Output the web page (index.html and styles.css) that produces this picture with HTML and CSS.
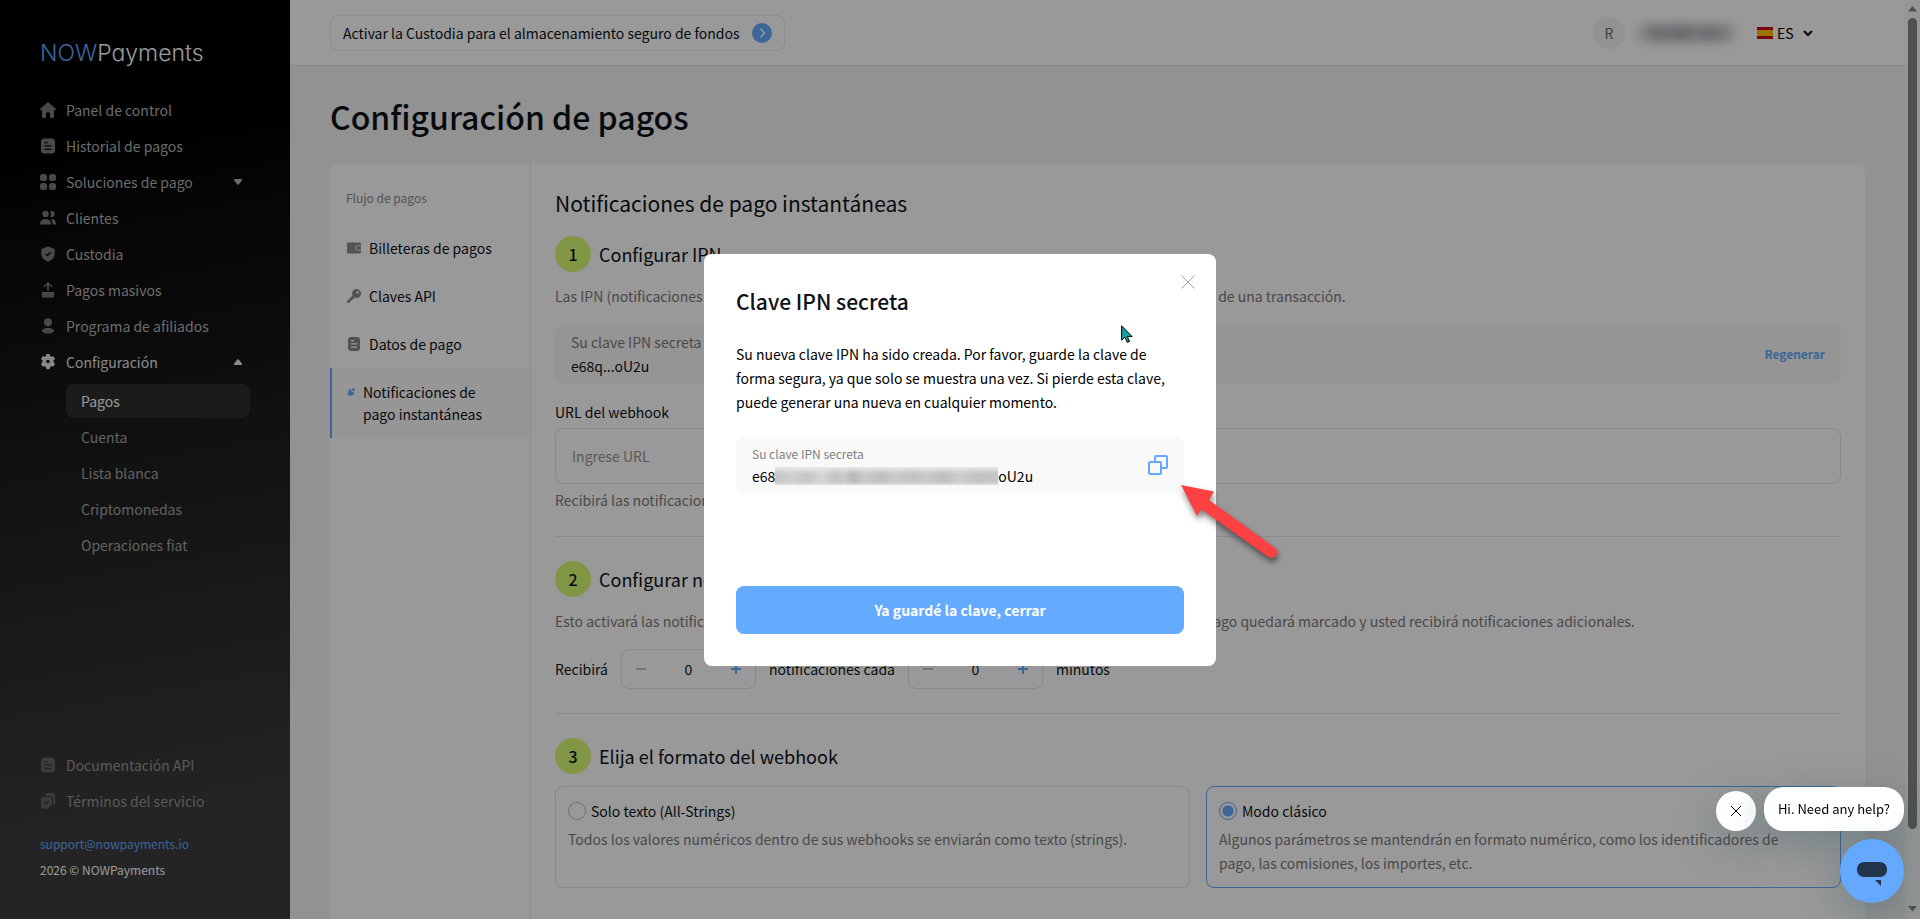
FILE: index.html
```html
<!DOCTYPE html>
<html lang="es">
<head>
<meta charset="utf-8">
<meta name="viewport" content="width=device-width, initial-scale=1">
<title>Configuración de pagos – NOWPayments</title>
<link rel="stylesheet" href="styles.css">
</head>
<body>
<div class="app">
  <aside class="sidebar">
    <a class="logo" href="#"><span class="logo-now">NOW</span>Payments</a>
    <nav class="menu">
      <a class="menu-item" href="#"><svg class="icon" viewBox="0 0 16 16"><path d="M7.300.5a1 1 0 0 1 1.400 0l7 6.300c.5.5.2 1.400-.5 1.400H14V15a1 1 0 0 1-1 1h-2.200a.8.8 0 0 1-.8-.8V12a2 2 0 0 0-4 0v3.200a.8.8 0 0 1-.8.8H3a1 1 0 0 1-1-1V8.200H.8c-.7 0-1-.9-.5-1.400z"/></svg>Panel de control</a>
      <a class="menu-item" href="#"><svg class="icon" viewBox="0 0 16 16"><path fill-rule="evenodd" d="M4.500.5h7a3.500 3.500 0 0 1 3.500 3.500v8a3.500 3.500 0 0 1-3.500 3.500h-7A3.500 3.500 0 0 1 1 12V4A3.500 3.500 0 0 1 4.500.5zM4.500 4v1.300h3V4zm0 3.300v1.300h7V7.300zm0 3.400V12h7v-1.300z"/></svg>Historial de pagos</a>
      <a class="menu-item" href="#"><svg class="icon" viewBox="0 0 16 16"><rect x="0" y="0" width="7" height="7" rx="2.500"/><rect x="9" y="0" width="7" height="7" rx="2.500"/><rect x="0" y="9" width="7" height="7" rx="2.500"/><rect x="9" y="9" width="7" height="7" rx="2.500"/></svg>Soluciones de pago<svg class="caret" viewBox="0 0 8 8"><path d="M1 1h6c1 0 1.300 1 .7 1.700L4.700 6.500a1 1 0 0 1-1.400 0L.3 2.700C-.3 2 0 1 1 1z"/></svg></a>
      <a class="menu-item" href="#"><svg class="icon" viewBox="0 0 16 16"><circle cx="5.500" cy="4" r="3.200"/><path d="M0 14.500C0 10.500 2.500 9 5.500 9s5.500 1.500 5.500 5.500z"/><path d="M10 1.200a3.200 3.200 0 1 1 0 5.600 5 5 0 0 0 0-5.600zM11 9c3.300 0 5 1.800 5 5.500h-3.500c0-2.500-.5-4-1.500-5.500z"/></svg>Clientes</a>
      <a class="menu-item" href="#"><svg class="icon" viewBox="0 0 16 16"><path fill-rule="evenodd" d="M8 .5l6.200 2.200c.3.100.5.300.5.600V7.500c0 4-2.500 6.500-6.700 8.200-4.200-1.700-6.700-4.200-6.700-8.200V3.300c0-.3.200-.5.500-.6zM7.400 10.600l3.800-3.800-1-1-2.800 2.800-1.200-1.200-1 1z"/></svg>Custodia</a>
      <a class="menu-item" href="#"><svg class="icon" viewBox="0 0 16 16"><path d="M8 0l4.200 4.300-1 1-2.400-2.400V8.500H7.200V2.900L4.800 5.300l-1-1zM2 10h12v4.500a1 1 0 0 1-1 1H3a1 1 0 0 1-1-1z"/></svg>Pagos masivos</a>
      <a class="menu-item" href="#"><svg class="icon" viewBox="0 0 16 16"><circle cx="8" cy="4.300" r="4"/><ellipse cx="8" cy="12.700" rx="6" ry="2.900"/></svg>Programa de afiliados</a>
      <a class="menu-item is-open" href="#"><svg class="icon" viewBox="0 0 16 16"><path fill-rule="evenodd" d="M6.700.5h2.600l.5 2 1.400.8 2-.6 1.300 2.300-1.500 1.500v1.700L14.500 9.900l-1.300 2.300-2-.5-1.400.8-.5 2.300H6.700l-.5-2.300-1.400-.8-2 .5L1.500 9.900 3 8.200V6.500L1.500 5l1.300-2.300 2 .6 1.400-.8zM8 5.200a2.300 2.300 0 1 0 0 4.600 2.300 2.300 0 0 0 0-4.600z" stroke-width="1" stroke="currentColor" stroke-linejoin="round"/></svg>Configuración<svg class="caret" viewBox="0 0 8 8"><path d="M1 7h6c1 0 1.300-1 .7-1.700L4.700 1.500a1 1 0 0 0-1.400 0L.3 5.300C-.3 6 0 7 1 7z"/></svg></a>
      <div class="submenu">
        <a class="submenu-item is-current" href="#">Pagos</a>
        <a class="submenu-item" href="#">Cuenta</a>
        <a class="submenu-item" href="#">Lista blanca</a>
        <a class="submenu-item" href="#">Criptomonedas</a>
        <a class="submenu-item" href="#">Operaciones fiat</a>
      </div>
    </nav>
    <footer class="sidebar-footer">
      <a class="menu-item is-muted" href="#"><svg class="icon" viewBox="0 0 16 16"><path fill-rule="evenodd" d="M4.500.5h7a3.500 3.500 0 0 1 3.500 3.500v8a3.500 3.500 0 0 1-3.500 3.500h-7A3.500 3.500 0 0 1 1 12V4A3.500 3.500 0 0 1 4.500.5zM4.500 4v1.300h3V4zm0 3.300v1.300h7V7.300zm0 3.400V12h7v-1.300z"/></svg>Documentación API</a>
      <a class="menu-item is-muted" href="#"><svg class="icon" viewBox="0 0 16 16"><path d="M7 0h5a3 3 0 0 1 3 3v7a2 2 0 0 1-2 2V6a3 3 0 0 0-3-3H5a3 3 0 0 1 2-3z"/><path fill-rule="evenodd" d="M3 4h7a2 2 0 0 1 2 2v5l-3.500 4.700H3a2 2 0 0 1-2-2V6a2 2 0 0 1 2-2zm2.700 7.800l3.600-3.500-1-1-2.600 2.600-1.200-1.200-1 1z"/></svg>Términos del servicio</a>
      <div class="contact">
        <a class="email" href="#">support@nowpayments.io</a>
        <span class="copyright">2026 © NOWPayments</span>
      </div>
    </footer>
  </aside>

  <div class="page">
    <header class="topbar">
      <a class="promo" href="#">Activar la Custodia para el almacenamiento seguro de fondos
        <svg class="promo-arrow" viewBox="0 0 20 20"><circle cx="10" cy="10" r="10" fill="#64a9ff"/><path d="M8.500 5.500l4 4.500-4 4.500" fill="none" stroke="#fff" stroke-width="1.400"/></svg>
      </a>
      <div class="account">
        <span class="avatar">R</span>
        <span class="user-name" aria-hidden="true"></span>
        <label class="language">
          <svg class="flag" viewBox="0 0 16 12"><path fill="#c60b1e" d="M0 0h16v12H0z"/><path fill="#ffc400" d="M0 3h16v6H0z"/></svg>
          <select aria-label="Idioma"><option>ES</option></select>
          <svg class="chevron" viewBox="0 0 10 8"><path d="M1 2l4 4 4-4" fill="none" stroke="#000" stroke-width="2"/></svg>
        </label>
      </div>
    </header>

    <main class="main">
      <h1>Configuración de pagos</h1>
      <div class="panel">
        <nav class="tabs">
          <div class="tabs-title">Flujo de pagos</div>
          <a class="tab" href="#"><svg class="tab-icon" viewBox="0 0 14 14"><path fill-rule="evenodd" d="M1.500 1.500H13a1 1 0 0 1 1 1v2h-3.500a2.500 2.500 0 0 0 0 5H14v2a1 1 0 0 1-1 1H1.500A1.500 1.500 0 0 1 0 11V3a1.500 1.500 0 0 1 1.500-1.500z"/><path d="M10.500 5.300H14v3.400h-3.500a1.700 1.700 0 0 1 0-3.400z"/></svg>Billeteras de pagos</a>
          <a class="tab" href="#"><svg class="tab-icon" viewBox="0 0 14 14"><path fill-rule="evenodd" d="M9.500 0A4.500 4.500 0 1 1 7.700 8.600L2 13.800 0 14v-1.700L5.500 6.500A4.500 4.500 0 0 1 9.500 0zm1.200 2.200a1.200 1.200 0 1 0 0 2.400 1.200 1.200 0 0 0 0-2.400z"/></svg>Claves API</a>
          <a class="tab" href="#"><svg class="tab-icon" viewBox="0 0 14 14"><path fill-rule="evenodd" d="M4 0h6a3 3 0 0 1 3 3v8a3 3 0 0 1-3 3H4a3 3 0 0 1-3-3V3a3 3 0 0 1 3-3zM4 3v1.200h3V3zm0 3.300v1.200h6V6.300zm0 3.300v1.200h6V9.600z"/></svg>Datos de pago</a>
          <a class="tab is-active" href="#"><svg class="tab-icon" viewBox="0 0 8 8"><path d="M4.200.8a2.200 2.200 0 0 0 2.600 3L6.500 6 7 7H0l1.200-1.500L1.500 3A2.800 2.800 0 0 1 4.200.8zM2.500 7h2.500c-.3 1.300-2.200 1.300-2.500 0z"/><circle cx="6.600" cy="1.600" r="1.400"/></svg>Notificaciones de pago instantáneas</a>
        </nav>

        <div class="content">
          <h2>Notificaciones de pago instantáneas</h2>

          <section class="step">
            <div class="step-head"><span class="step-number">1</span><h3>Configurar IPN</h3></div>
            <p class="text">Las IPN (notificaciones de pago instantáneas) se le envían cada vez que ocurre un cambio en el estado de una transacción.</p>
            <div class="key-row">
              <div>
                <div class="key-label">Su clave IPN secreta</div>
                <div>e68q...oU2u</div>
              </div>
              <button class="link-button" type="button">Regenerar</button>
            </div>
            <div class="field">
              <label for="webhook">URL del webhook</label>
              <input id="webhook" class="text-input" type="text" placeholder="Ingrese URL">
              <p class="text">Recibirá las notificaciones de pago en esta URL.</p>
            </div>
          </section>

          <section class="step">
            <div class="step-head"><span class="step-number">2</span><h3>Configurar notificaciones recurrentes</h3></div>
            <p class="text">Esto activará las notificaciones recurrentes. Siempre que el estado del pago cambie a otro estado, el pago quedará marcado y usted recibirá notificaciones adicionales.</p>
            <div class="repeat">
              <label for="count">Recibirá</label>
              <div class="stepper">
                <button type="button" disabled aria-label="Menos"><svg viewBox="0 0 10 10"><path d="M0 5h10"/></svg></button>
                <input id="count" type="text" value="0">
                <button type="button" aria-label="Más"><svg viewBox="0 0 10 10"><path d="M0 5h10M5 0v10"/></svg></button>
              </div>
              <label for="minutes">notificaciones cada</label>
              <div class="stepper">
                <button type="button" disabled aria-label="Menos"><svg viewBox="0 0 10 10"><path d="M0 5h10"/></svg></button>
                <input id="minutes" type="text" value="0">
                <button type="button" aria-label="Más"><svg viewBox="0 0 10 10"><path d="M0 5h10M5 0v10"/></svg></button>
              </div>
              <span>minutos</span>
            </div>
          </section>

          <section class="step">
            <div class="step-head"><span class="step-number">3</span><h3>Elija el formato del webhook</h3></div>
            <div class="options">
              <label class="option">
                <span class="option-title"><input type="radio" name="format">Solo texto (All-Strings)</span>
                <span class="option-text">Todos los valores numéricos dentro de sus webhooks se enviarán como texto (strings).</span>
              </label>
              <label class="option is-selected">
                <span class="option-title"><input type="radio" name="format" checked>Modo clásico</span>
                <span class="option-text">Algunos parámetros se mantendrán en formato numérico, como los identificadores de pago, las comisiones, los importes, etc.</span>
              </label>
            </div>
          </section>
        </div>
      </div>
    </main>
  </div>

  <div class="scrollbar" aria-hidden="true">
    <svg viewBox="0 0 9 6"><path d="M4.500 0L9 5.500H0z"/></svg>
    <div class="scrollbar-track"><div class="scrollbar-thumb"></div></div>
    <svg viewBox="0 0 9 6"><path d="M4.500 5.500L9 0H0z"/></svg>
  </div>
</div>

<div class="overlay">
  <div class="dialog" role="dialog" aria-modal="true" aria-labelledby="dialog-title">
    <button class="close" type="button" aria-label="Cerrar"><svg viewBox="0 0 14 14"><path d="M.5.5l13 13M13.500.5l-13 13"/></svg></button>
    <h2 id="dialog-title" class="dialog-title">Clave IPN secreta</h2>
    <p class="dialog-text">Su nueva clave IPN ha sido creada. Por favor, guarde la clave de forma segura, ya que solo se muestra una vez. Si pierde esta clave, puede generar una nueva en cualquier momento.</p>
    <div class="secret">
      <div>
        <div class="secret-label">Su clave IPN secreta</div>
        <div class="secret-value">e68<span class="mask" aria-hidden="true"></span>oU2u</div>
      </div>
      <button class="copy" type="button" aria-label="Copiar"><svg viewBox="0 0 20 20"><path d="M7 6.500V2a1 1 0 0 1 1-1h10a1 1 0 0 1 1 1v10a1 1 0 0 1-1 1h-4.500"/><rect x="1" y="7" width="12" height="12" rx="1"/></svg></button>
    </div>
    <button class="primary" type="button">Ya guardé la clave, cerrar</button>

    <svg class="pointer" viewBox="0 0 12 18"><path d="M.6.8v14.400l3.300-3 2.400 5.200 2.300-1-2.300-4.800h4.800z" fill="#18a0a0" stroke="#000" stroke-width="1"/></svg>
    <svg class="arrow" viewBox="0 0 120 96"><path fill="#fb4141" d="M7 9l33 6.500-5 8.500 65.500 47.500a5.500 5.500 0 0 1-6 9.500L27.500 33.500l-4.500 6.500z"/></svg>
  </div>
</div>

<div class="chat">
  <div class="chat-row">
    <button class="chat-close" type="button" aria-label="Close"><svg viewBox="0 0 12 12"><path d="M1 1l10 10M11 1L1 11"/></svg></button>
    <button class="chat-bubble" type="button">Hi. Need any help?</button>
  </div>
  <button class="chat-launcher" type="button" aria-label="Chat"><svg viewBox="0 0 30 24"><rect width="30" height="15" rx="7"/><path d="M18 18h6v6z"/></svg></button>
</div>
</body>
</html>
```
FILE: styles.css
```css
* {
  box-sizing: border-box;
}

body,
h1,
h2,
h3,
p {
  margin: 0;
}

body {
  font-family: "Noto Sans CJK JP", "Noto Sans", sans-serif;
  font-size: 14px;
  line-height: 24px;
  color: #0d1217;
  overflow: hidden;
}

a {
  color: inherit;
  text-decoration: none;
}

button,
input,
select {
  font: inherit;
  color: inherit;
  margin: 0;
}

button {
  border: 0;
  padding: 0;
  background: none;
  cursor: pointer;
}

svg {
  display: block;
  flex: none;
  fill: currentColor;
}

.app {
  display: flex;
  height: 100vh;
}

/* Sidebar */
.sidebar {
  flex: none;
  width: 290px;
  padding: 38px 40px 36px;
  display: flex;
  flex-direction: column;
  background: linear-gradient(170deg, #000 14%, #3d3d3d 88%);
  color: #b4b4b4;
}

.logo {
  font-family: Inter, sans-serif;
  font-size: 23px;
  font-weight: 300;
  font-feature-settings: "cv11";
  line-height: 30px;
  color: #fff;
  margin-bottom: 24px;
}

.logo-now {
  color: #64a9ff;
}

.menu-item {
  display: flex;
  align-items: center;
  gap: 10px;
  height: 36px;
}

.icon {
  width: 16px;
  height: 16px;
  color: #7a7a7a;
}

.caret {
  width: 8px;
  height: 8px;
  margin-left: auto;
  margin-right: 8px;
}

.is-open,
.is-open .icon {
  color: #e6e6e6;
}

.is-muted {
  color: #969696;
}

.is-muted .icon {
  color: #636363;
}

.submenu {
  margin: 4px 0 0 26px;
  display: flex;
  flex-direction: column;
  gap: 2px;
}

.submenu-item {
  padding: 5px 15px;
  border-radius: 8px;
  color: #a3a3a3;
}

.is-current {
  background: #2d2d2d;
  color: #fff;
}

.sidebar-footer {
  margin-top: auto;
}

.contact {
  margin-top: 12px;
  display: flex;
  flex-direction: column;
  font-size: 12px;
  line-height: 26px;
}

.email {
  color: #64a9ff;
}

.copyright {
  color: #fff;
}

/* Page */
.page {
  flex: 1;
  min-width: 0;
  background: #f3f3f3;
}

.topbar {
  height: 66px;
  padding: 0 92px 0 40px;
  display: flex;
  align-items: center;
  justify-content: space-between;
  background: #fff;
  border-bottom: 1px solid #e4e4e4;
}

.promo {
  display: flex;
  align-items: center;
  gap: 12px;
  padding: 5px 12px;
  border: 1px solid #ebebeb;
  border-radius: 8px;
}

.promo-arrow {
  width: 20px;
  height: 20px;
}

.account {
  display: flex;
  align-items: center;
}

.avatar {
  width: 32px;
  height: 32px;
  border-radius: 50%;
  background: #f3f3f3;
  color: #6b6b6b;
  line-height: 32px;
  text-align: center;
}

.user-name {
  width: 98px;
  height: 18px;
  margin: 0 22px 0 12px;
  background: linear-gradient(90deg, #e8e8e8, #b3b5ba 20%, #b9bbc0 35%, #a9abb0 48%, #c5c7cb 58%, #b3b5ba 70%, #c0c2c6 85%, #e4e4e4);
  filter: blur(5px);
}

.language {
  display: flex;
  align-items: center;
}

.flag {
  width: 16px;
  height: 12px;
  margin-right: 4px;
}

.language select {
  appearance: none;
  width: 26px;
  border: 0;
  padding: 0;
  background: none;
  color: #000;
}

.chevron {
  width: 10px;
  height: 8px;
}

.main {
  padding: 30px 40px 0;
}

h1 {
  font-size: 32px;
  font-weight: 500;
  line-height: 40px;
  margin-bottom: 28px;
}

.panel {
  display: flex;
  background: #fff;
  border-radius: 8px;
}

/* Tabs */
.tabs {
  flex: none;
  width: 201px;
  padding-top: 24px;
  border-right: 1px solid #ebebeb;
}

.tabs-title {
  padding-left: 16px;
  margin-bottom: 16px;
  font-size: 12px;
  line-height: 20px;
  color: #8c8c8c;
}

.tab {
  display: flex;
  gap: 8px;
  padding: 13px 30px 13px 15px;
  border-left: 2px solid transparent;
  line-height: 22px;
}

.tab-icon {
  width: 14px;
  height: 14px;
  margin-top: 4px;
  color: #8a8a8a;
}

.tab.is-active {
  border-color: #64a9ff;
  background: #fafafa;
}

.is-active .tab-icon {
  width: 8px;
  height: 8px;
  margin-top: 7px;
}

.is-active .tab-icon {
  color: #64a9ff;
}

/* Content */
.content {
  flex: 1;
  min-width: 0;
  padding: 23px 24px 40px;
}

h2 {
  font-size: 21px;
  font-weight: 400;
  line-height: 32px;
  margin-bottom: 17px;
}

.step + .step {
  margin-top: 24px;
  padding-top: 24px;
  border-top: 1px solid #e8e8e8;
}

.step-head {
  display: flex;
  align-items: center;
  gap: 8px;
  margin-bottom: 12px;
}

.step-number {
  width: 36px;
  height: 36px;
  border-radius: 50%;
  background: #d8fa72;
  font-size: 16px;
  font-weight: 500;
  line-height: 36px;
  text-align: center;
}

h3 {
  font-size: 18px;
  font-weight: 400;
  line-height: 32px;
}

.text {
  color: #7a7a7a;
  white-space: nowrap;
}

.key-row {
  display: flex;
  align-items: center;
  justify-content: space-between;
  margin: 17px 0;
  padding: 5px 16px;
  border-radius: 8px;
  background: #f9f9f9;
}

.key-label {
  color: #7a7a7a;
}

.link-button {
  font-size: 12px;
  font-weight: 700;
  color: #64a9ff;
}

.field {
  display: flex;
  flex-direction: column;
  gap: 4px;
}

.text-input {
  height: 56px;
  padding: 0 16px;
  border: 1px solid #e3e3e3;
  border-radius: 8px;
  background: #fff;
}

.text-input::placeholder {
  color: #959595;
}

.repeat {
  display: flex;
  align-items: center;
  gap: 13px;
  margin-top: 16px;
}

.stepper {
  display: flex;
  align-items: center;
  width: 135px;
  height: 40px;
  padding: 0 14px;
  border: 1px solid #e3e3e3;
  border-radius: 8px;
}

.stepper input {
  flex: 1;
  min-width: 0;
  width: 0;
  padding: 0;
  border: 0;
  background: none;
  text-align: center;
}

.stepper svg {
  width: 10px;
  height: 10px;
  stroke: #64a9ff;
  stroke-width: 2;
}

.stepper button:disabled svg {
  stroke: #c4c4c4;
}

.options {
  display: grid;
  grid-template-columns: 1fr 1fr;
  gap: 16px;
}

.option {
  display: flex;
  flex-direction: column;
  gap: 4px;
  min-height: 102px;
  padding: 12px 32px 12px 12px;
  border: 1px solid #e3e3e3;
  border-radius: 8px;
}

.option.is-selected {
  border-color: #64a9ff;
}

.option-title {
  display: flex;
  align-items: center;
  gap: 5px;
}

.option-title input {
  appearance: none;
  width: 18px;
  height: 18px;
  border: 1px solid #c0c0c0;
  border-radius: 50%;
}

.option-title input:checked {
  border-color: #64a9ff;
  background: radial-gradient(#64a9ff 5px, #fff 6px);
}

.option-text {
  color: #7a7a7a;
}

/* Scrollbar */
.scrollbar {
  flex: none;
  width: 15px;
  padding: 6px 3px 7px;
  display: flex;
  flex-direction: column;
  gap: 6px;
  background: #fafafa;
  color: #858585;
}

.scrollbar svg {
  width: 9px;
  height: 6px;
}

.scrollbar-track {
  flex: 1;
}

.scrollbar-thumb {
  height: 92%;
  border-radius: 5px;
  background: #858585;
}

/* Dialog */
.overlay {
  position: fixed;
  inset: 0;
  display: flex;
  align-items: center;
  justify-content: center;
  background: rgba(0, 0, 0, 0.4);
}

.dialog {
  position: relative;
  width: 512px;
  padding: 31px 32px 32px;
  border-radius: 8px;
  background: #fff;
}

.close {
  position: absolute;
  top: 21px;
  right: 21px;
}

.close svg {
  width: 14px;
  height: 14px;
  stroke: #a3a3a3;
  stroke-width: 1;
}

.dialog-title {
  font-weight: 500;
  margin-bottom: 25px;
}

.dialog-text {
  margin-bottom: 23px;
  color: #000;
}

.secret {
  display: flex;
  align-items: center;
  justify-content: space-between;
  margin-bottom: 93px;
  padding: 6px 16px;
  border-radius: 8px;
  background: #f9f9f9;
}

.secret-label {
  font-size: 12px;
  line-height: 22px;
  color: #7f7f7f;
}

.secret-value {
  display: flex;
  align-items: center;
  line-height: 22px;
  color: #000;
}

.mask {
  width: 223px;
  height: 18px;
  background:
    linear-gradient(rgba(235, 235, 235, 0.9), transparent 40%, transparent 80%, rgba(225, 225, 225, 0.9)),
    linear-gradient(90deg, #c4c4c4, #d0d0d0 8%, #c6c6c6 14%, #d6d6d6 21%, #c2c2c2 27%, #cacaca 31%, #b8b8b8 35%, #c9c9c9 40%, #c0c0c0 48%, #cacaca 54%, #c2c2c2 62%, #c9c9c9 68%, #c0c0c0 76%, #cecece 83%, #c2c2c2 90%, #c6c6c6);
}

.copy svg {
  width: 20px;
  height: 20px;
  fill: none;
  stroke: #64a9ff;
  stroke-width: 2;
}

.primary {
  display: block;
  width: 100%;
  height: 48px;
  border-radius: 8px;
  background: #64aaff;
  color: #fff;
  font-weight: 700;
}

.pointer {
  position: absolute;
  left: 417px;
  top: 71px;
  width: 12px;
  height: 18px;
}

.arrow {
  position: absolute;
  left: 470px;
  top: 222px;
  width: 120px;
  height: 96px;
  overflow: visible;
  filter: drop-shadow(1px 4px 3px rgba(0, 0, 0, 0.5));
}

/* Chat */
.chat {
  position: fixed;
  right: 16px;
  bottom: 16px;
  display: flex;
  flex-direction: column;
  align-items: flex-end;
  gap: 8px;
  color: #000;
}

.chat-row {
  display: flex;
  align-items: flex-end;
  gap: 8px;
}

.chat button {
  display: flex;
  align-items: center;
  justify-content: center;
  background: #fff;
  box-shadow: 0 12px 40px rgba(42, 84, 92, 0.35);
}

.chat .chat-close {
  width: 40px;
  height: 40px;
  border-radius: 50%;
}

.chat-close svg {
  width: 12px;
  height: 12px;
  stroke: #000;
  stroke-width: 1;
}

.chat .chat-bubble {
  padding: 10px 14px;
  border-radius: 20px;
  font-size: 13px;
}

.chat .chat-launcher {
  width: 64px;
  height: 64px;
  border-radius: 50%;
  background: #64a9ff;
  color: #22344a;
}

.chat-launcher svg {
  width: 30px;
  height: 24px;
  margin-top: 6px;
}
```
